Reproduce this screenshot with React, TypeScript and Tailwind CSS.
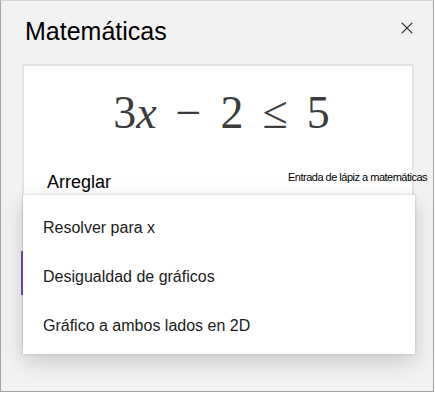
import { X } from "lucide-react";

const items = [
  "Resolver para x",
  "Desigualdad de gráficos",
  "Gráfico a ambos lados en 2D",
];

export default function App() {
  return (
    <div className="relative h-[392px] w-[434px] border border-[#a3a3a3] border-t-[#d4d4d4] bg-[#f2f2f2] font-['Liberation_Sans',Arial,sans-serif] text-[#1a1a1a]">
      <div className="flex items-start justify-between pl-[24px] pr-[16px] pt-[14px]">
        <h1 className="text-[25px] leading-[32px] text-black">Matemáticas</h1>
        <button className="mt-[3px] text-[#3a3a3a]">
          <X size={20} strokeWidth={1.3} />
        </button>
      </div>

      <div className="ml-[21px] mt-[17px] h-[282px] w-[392px] border-2 border-[#e4e4e4] bg-white">
        <div className="flex items-center justify-center gap-[19px] pl-[7px] pt-[19px] font-['Liberation_Serif','Times_New_Roman',serif] text-[46px] leading-[56px] text-[#3c3c3c]">
          <span>
            3<span className="italic">x</span>
          </span>
          <span>−</span>
          <span>2</span>
          <span>≤</span>
          <span>5</span>
        </div>
        <div className="mt-[29px] flex items-start pl-[23px]">
          <span className="w-[241px] shrink-0 text-[18px] leading-[24px] text-black">
            Arreglar
          </span>
          <span className="shrink-0 whitespace-nowrap text-[11px] leading-[14px] tracking-[-0.5px] text-black">
            Entrada de lápiz a matemáticas
          </span>
        </div>
      </div>

      <div className="absolute left-[20px] top-[250px] h-[44px] w-[1.5px] bg-[#7b4fa5]" />

      <div className="absolute left-[22px] top-[194px] w-[392px] bg-white pb-[4px] pt-[8px] shadow-[0_8px_22px_rgba(0,0,0,0.16),0_0_3px_rgba(0,0,0,0.18)]">
        {items.map((item) => (
          <div
            key={item}
            className="flex h-[49px] items-center pl-[20px] text-[16px] text-[#1a1a1a]"
          >
            {item}
          </div>
        ))}
      </div>
    </div>
  );
}
